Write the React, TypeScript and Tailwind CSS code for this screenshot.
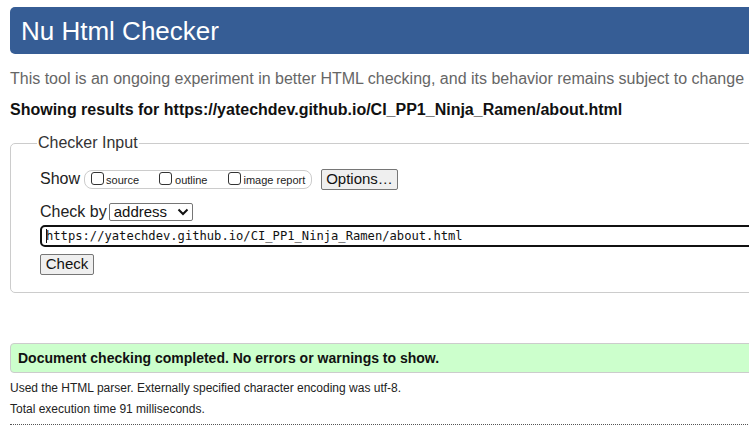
import React from "react";

function Box({ className = "" }: { className?: string }) {
  return <span className={"inline-block w-[13px] h-[13px] border border-[#333] rounded-[3px] bg-white shrink-0 " + className} />;
}

export default function App() {
  return (
    <div className="w-[749px] h-[432px] overflow-hidden bg-white font-['Liberation_Sans',Arial,sans-serif] text-[#111]">
      <div className="w-[1000px] pl-[10px] pt-[7px]">
        <div className="h-[47px] bg-[#365d95] rounded-[5px] flex items-center pl-[11px] text-white text-[26px] leading-none">
          Nu Html Checker
        </div>
        <p className="mt-[15px] text-[16px] leading-[20px] text-[#666] whitespace-nowrap">
          This tool is an ongoing experiment in better HTML checking, and its behavior remains subject to change
        </p>
        <p className="mt-[11px] text-[16px] leading-[20px] font-bold text-[#111] whitespace-nowrap">
          Showing results for https://yatechdev.github.io/CI_PP1_Ninja_Ramen/about.html
        </p>
        <fieldset className="mt-[13px] border border-[#ccc] rounded-[5px] pl-[29px] pb-[17px] w-[900px]">
          <legend className="ml-[-3px] px-[1px] text-[16px] leading-[20px] text-[#333]">Checker Input</legend>
          <div className="mt-[16px] flex items-center h-[20px]">
            <span className="text-[16px] text-[#222]">Show</span>
            <div className="ml-[4px] h-[19px] w-[228px] border border-[#ccc] rounded-[8px] flex items-center text-[11px] text-[#222] pl-[6px]">
              <Box className="mb-[2px]" />
              <span className="ml-[2px] mt-[3px]">source</span>
              <Box className="ml-[20px] mb-[2px]" />
              <span className="ml-[3px] mt-[3px]">outline</span>
              <Box className="ml-[21px] mb-[2px]" />
              <span className="ml-[2px] mt-[3px]">image report</span>
            </div>
            <div className="ml-[9px] h-[21px] w-[77px] border border-[#767676] rounded-[2px] bg-[#efefef] flex items-center justify-center text-[15px] text-[#111]">
              Options…
            </div>
          </div>
          <div className="mt-[13px] flex items-center h-[20px]">
            <span className="text-[16px] text-[#222]">Check by</span>
            <div className="ml-[2px] h-[18px] w-[84px] border border-[#767676] rounded-[2px] flex items-center pl-[4px] text-[15px] text-[#111]">
              <span className="flex-1">address</span>
              <svg width="12" height="8" viewBox="0 0 12 8" className="mr-[3px]">
                <path d="M1.5 1.5 L6 6 L10.5 1.5" stroke="#111" strokeWidth="2" fill="none" />
              </svg>
            </div>
          </div>
          <div className="mt-[3px] h-[22px] border-2 border-[#111] rounded-[5px] flex items-center pl-[4px] font-['DejaVu_Sans_Mono','Liberation_Mono',monospace] text-[12.15px] text-[#111] w-[880px]">
            <span className="border-l border-[#111] h-[14px] mr-[-1px]" />
            https://yatechdev.github.io/CI_PP1_Ninja_Ramen/about.html
          </div>
          <div className="mt-[7px] h-[21px] w-[54px] border border-[#767676] rounded-[2px] bg-[#efefef] flex items-center justify-center text-[15px] text-[#111]">
            Check
          </div>
        </fieldset>
        <div className="mt-[50px] h-[30px] border border-[#ccc] rounded-l-[4px] bg-[#ccffcc] flex items-center pl-[7px] text-[14px] font-bold text-[#111] whitespace-nowrap">
          Document checking completed. No errors or warnings to show.
        </div>
        <p className="mt-[8px] text-[12px] leading-[15px] text-[#222] whitespace-nowrap">
          Used the HTML parser. Externally specified character encoding was utf-8.
        </p>
        <p className="mt-[6px] text-[12px] leading-[15px] text-[#222] whitespace-nowrap">
          Total execution time 91 milliseconds.
        </p>
        <div className="mt-[7px] border-t border-dotted border-[#555]" />
      </div>
    </div>
  );
}
